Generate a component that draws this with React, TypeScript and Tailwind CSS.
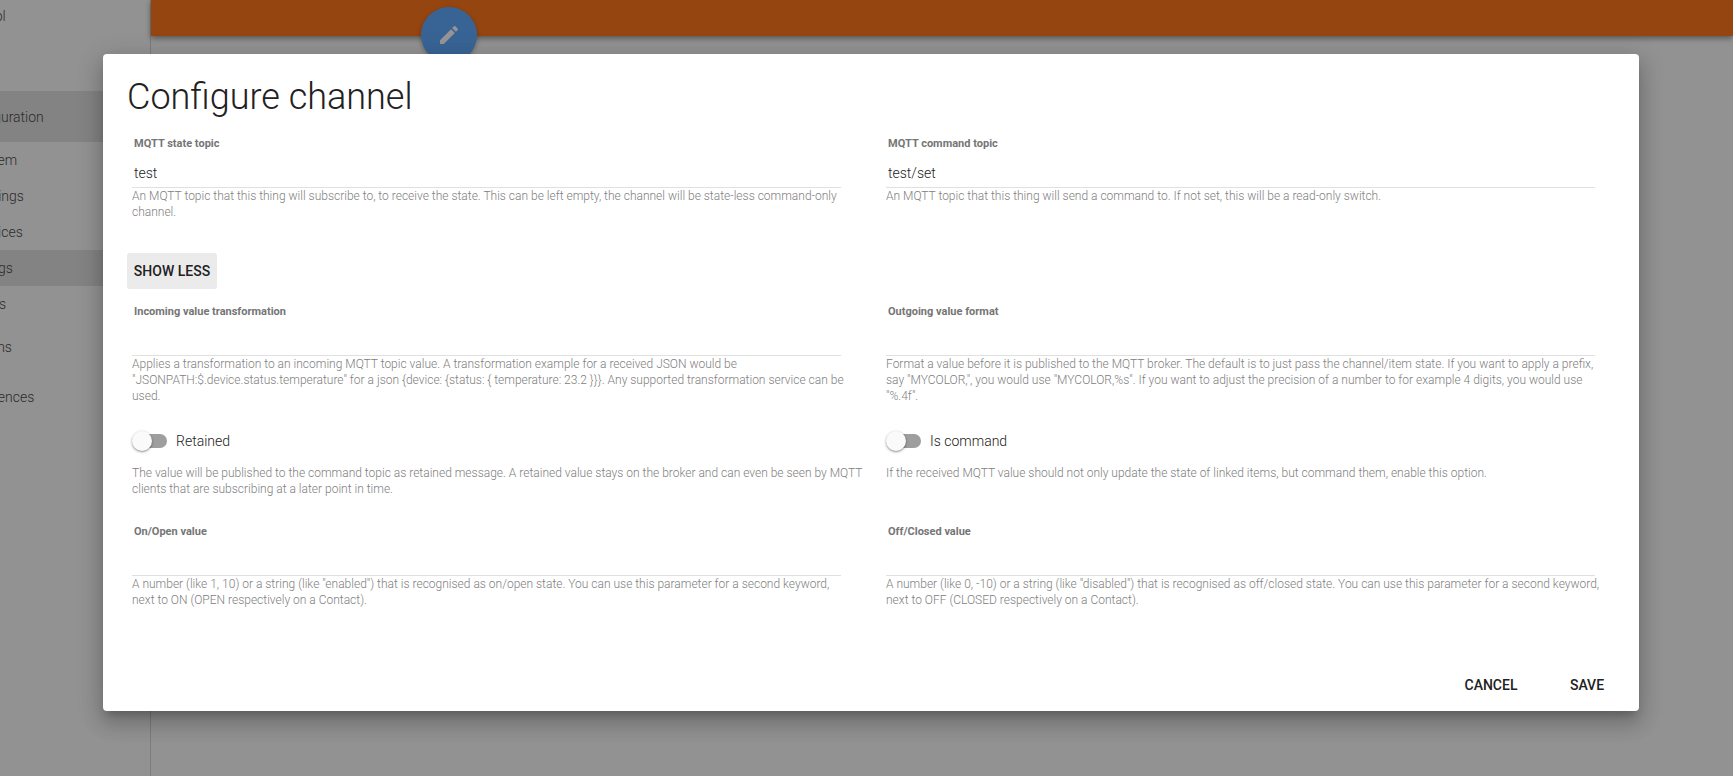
import { useId, useState } from "react";
import type { ReactNode } from "react";
import { MdEdit } from "react-icons/md";

function NavLink({ children, sub, active }: { children: ReactNode; sub?: boolean; active?: boolean }) {
  const size = sub ? "h-9 pl-[26px]" : active ? "h-[51px] pl-4" : "h-[50px] pl-4";
  return (
    <a
      href="#"
      className={`flex items-center text-sm font-light text-[#333] ${size} ${active ? "bg-[#ddd]" : ""}`}
    >
      {children}
    </a>
  );
}

function Sidebar() {
  return (
    <nav className="-ml-[55px] flex w-[206px] shrink-0 flex-col border-r border-[#d0d0d0] bg-[#fafafa]">
      <div className="-mt-[9px] mb-[50px]">
        <NavLink>Control</NavLink>
      </div>
      <NavLink active>Configuration</NavLink>
      <NavLink sub>System</NavLink>
      <NavLink sub>Bindings</NavLink>
      <NavLink sub>Services</NavLink>
      <NavLink sub active>Things</NavLink>
      <NavLink sub>Items</NavLink>
      <NavLink>Add-ons</NavLink>
      <NavLink>Preferences</NavLink>
    </nav>
  );
}

function Help({ children }: { children: ReactNode }) {
  return <p className="text-xs leading-4 font-light text-[#808080]">{children}</p>;
}

function TextField({ label, value, help }: { label: string; value?: string; help: string }) {
  const id = useId();
  return (
    <div className="pr-[30px]">
      <div className="pr-2.5">
        <label htmlFor={id} className="block pl-0.5 text-[11px] leading-4 font-bold text-[#757575]">
          {label}
        </label>
        <input
          id={id}
          type="text"
          defaultValue={value}
          className="mt-1.5 block h-[30px] w-full border-b border-[#e0e0e0] px-0.5 text-sm font-light text-[#212121] outline-none"
        />
      </div>
      <Help>{help}</Help>
    </div>
  );
}

function Toggle({ label, help }: { label: string; help: string }) {
  const [on, setOn] = useState(false);
  return (
    <div className="pr-3 pb-px">
      <label className="flex h-[22px] items-center gap-2 text-sm font-light text-[#212121]">
        <span className="relative flex h-5 w-9 items-center">
          <input
            type="checkbox"
            role="switch"
            checked={on}
            onChange={(e) => setOn(e.target.checked)}
            className="peer ml-px h-3.5 w-[34px] appearance-none rounded-full bg-[#9e9e9e] checked:bg-[#8fb8ee]"
          />
          <span className="pointer-events-none absolute top-0 left-0 size-5 rounded-full bg-[#fafafa] shadow-[0_1px_3px_rgba(0,0,0,0.35),0_1px_1px_rgba(0,0,0,0.15)] peer-checked:left-4 peer-checked:bg-[#4da0ff]" />
        </span>
        {label}
      </label>
      <div className="mt-[13px]">
        <Help>{help}</Help>
      </div>
    </div>
  );
}

function Row({ children }: { children: ReactNode }) {
  return <div className="grid grid-cols-2 gap-x-[5px] pl-[5px]">{children}</div>;
}

function FlatButton({ children }: { children: ReactNode }) {
  return (
    <button type="button" className="h-9 min-w-[88px] rounded-[3px] text-sm font-medium text-[#212121] uppercase">
      {children}
    </button>
  );
}

function ConfigureDialog() {
  return (
    <form
      role="dialog"
      aria-label="Configure channel"
      className="w-full rounded bg-white shadow-[0_7px_8px_-4px_rgba(0,0,0,0.2),0_13px_19px_2px_rgba(0,0,0,0.14),0_5px_24px_4px_rgba(0,0,0,0.12)]"
    >
      <div className="pt-[23px] pr-1 pl-6">
        <h2 className="text-4xl leading-10 font-light text-[#212121]">Configure channel</h2>
        <div className="mt-[19px]">
          <Row>
            <TextField
              label="MQTT state topic"
              value="test"
              help="An MQTT topic that this thing will subscribe to, to receive the state. This can be left empty, the channel will be state-less command-only channel."
            />
            <TextField
              label="MQTT command topic"
              value="test/set"
              help="An MQTT topic that this thing will send a command to. If not set, this will be a read-only switch."
            />
          </Row>
        </div>
        <button
          type="button"
          className="mt-[33px] mb-[15px] block h-9 min-w-[90px] rounded-[3px] bg-[#ebebeb] px-1.5 text-sm font-medium text-[#212121] uppercase"
        >
          Show less
        </button>
        <div className="flex flex-col gap-[26px]">
          <Row>
            <TextField
              label="Incoming value transformation"
              help={'Applies a transformation to an incoming MQTT topic value. A transformation example for a received JSON would be "JSONPATH:$.device.status.temperature" for a json {device: {status: { temperature: 23.2 }}}. Any supported transformation service can be used.'}
            />
            <TextField
              label="Outgoing value format"
              help={'Format a value before it is published to the MQTT broker. The default is to just pass the channel/item state. If you want to apply a prefix, say "MYCOLOR,", you would use "MYCOLOR,%s". If you want to adjust the precision of a number to for example 4 digits, you would use "%.4f".'}
            />
          </Row>
          <Row>
            <Toggle
              label="Retained"
              help="The value will be published to the command topic as retained message. A retained value stays on the broker and can even be seen by MQTT clients that are subscribing at a later point in time."
            />
            <Toggle
              label="Is command"
              help="If the received MQTT value should not only update the state of linked items, but command them, enable this option."
            />
          </Row>
          <Row>
            <TextField
              label="On/Open value"
              help={'A number (like 1, 10) or a string (like "enabled") that is recognised as on/open state. You can use this parameter for a second keyword, next to ON (OPEN respectively on a Contact).'}
            />
            <TextField
              label="Off/Closed value"
              help={'A number (like 0, -10) or a string (like "disabled") that is recognised as off/closed state. You can use this parameter for a second keyword, next to OFF (CLOSED respectively on a Contact).'}
            />
          </Row>
        </div>
      </div>
      <div className="mt-[59px] flex justify-end gap-2 px-2 pb-2">
        <FlatButton>Cancel</FlatButton>
        <FlatButton>Save</FlatButton>
      </div>
    </form>
  );
}

export default function App() {
  return (
    <div className="relative flex min-h-screen overflow-hidden bg-[#fafafa] font-[Roboto,sans-serif]">
      <Sidebar />
      <main className="min-w-0 flex-1">
        <header className="relative h-9 bg-[#ff6600] shadow-[0_2px_6px_rgba(0,0,0,0.5)]">
          <button
            type="button"
            aria-label="Edit"
            className="absolute top-[7px] left-[270px] flex size-14 items-center justify-center rounded-full bg-[#4da1ff] text-white shadow-[0_2px_5px_rgba(0,0,0,0.35)]"
          >
            <MdEdit className="size-6" />
          </button>
        </header>
      </main>
      <div className="absolute inset-0 bg-[rgba(33,33,33,0.48)] pt-[54px] pr-[94px] pl-[103px]">
        <ConfigureDialog />
      </div>
    </div>
  );
}
